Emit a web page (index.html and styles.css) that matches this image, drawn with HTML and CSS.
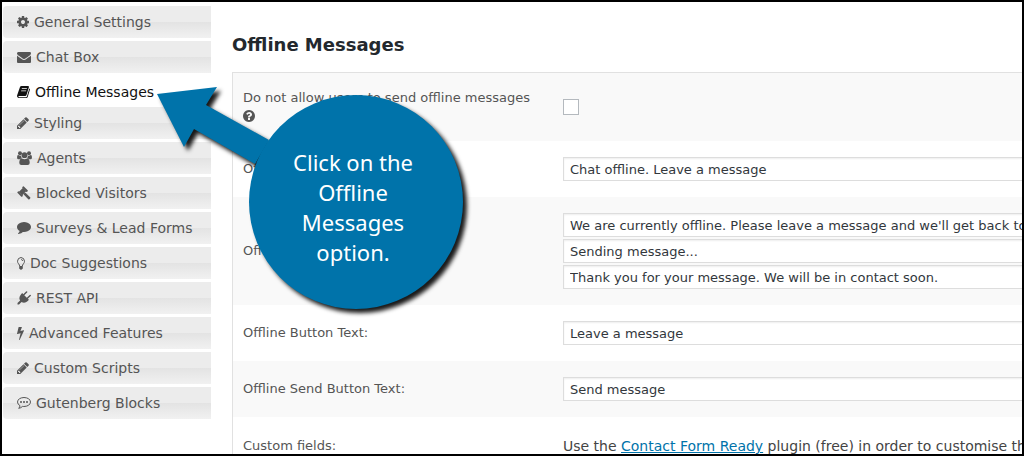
FILE: index.html
```
<!DOCTYPE html>
<html lang="en">

<head>
    <meta charset="UTF-8">
    <meta name="viewport" content="width=device-width, initial-scale=1.0">
    <title>Offline Messages</title>
    <link rel="stylesheet" href="styles.css">
</head>

<body>
    <div class="frame">
        <nav class="tabs">
            <a href="#general" class="tab">
                <svg class="icon w12" viewBox="128 128 1536 1536"><path d="M1152 896q0-106-75-181t-181-75-181 75-75 181 75 181 181 75 181-75 75-181zm512-109v222q0 12-8 23t-20 13l-185 28q-19 54-39 91 35 50 107 138 10 12 10 25t-9 23q-27 37-99 108t-94 71q-12 0-26-9l-138-108q-44 23-91 38-16 136-29 186-7 28-36 28h-222q-14 0-24.500-8.500t-11.500-21.500l-28-184q-49-16-90-37l-141 107q-10 9-25 9-14 0-25-11-126-114-165-168-7-10-7-23 0-12 8-23 15-21 51-66.500t54-70.500q-27-50-41-99l-183-27q-13-2-21-12.500t-8-23.500v-222q0-12 8-23t19-13l186-28q14-46 39-92-40-57-107-138-10-12-10-24 0-10 9-23 26-36 98.500-107.500t94.500-71.500q13 0 26 10l138 107q44-23 91-38 16-136 29-186 7-28 36-28h222q14 0 24.500 8.500t11.500 21.500l28 184q49 16 90 37l142-107q9-9 24-9 13 0 25 10 129 119 165 170 7 8 7 22 0 12-8 23-15 21-51 66.500t-54 70.500q26 50 41 98l183 28q13 2 21 12.500t8 23.500z"/></svg>
                General Settings
            </a>
            <a href="#chatbox" class="tab">
                <svg class="icon w14" viewBox="0 128 1792 1536"><path d="M1792 710v794q0 66-47 113t-113 47h-1472q-66 0-113-47t-47-113v-794q44 49 101 87 362 246 497 345 57 42 92.500 65.500t94.500 48 110 24.500h2q51 0 110-24.500t94.500-48 92.500-65.500q170-123 498-345 57-39 100-87zm0-294q0 79-49 151t-122 123q-376 261-468 325-10 7-42.500 30.500t-54 38-52 32.500-57.500 27-50 9h-2q-23 0-50-9t-57.500-27-52-32.500-54-38-42.500-30.500q-91-64-262-182.500t-205-142.500q-62-42-117-115.500t-55-136.500q0-78 41.500-130t118.500-52h1472q65 0 112.500 47t47.500 113z"/></svg>
                Chat Box
            </a>
            <a href="#offline" class="tab active">
                <svg class="icon w13" viewBox="0 0 13 12"><path fill-rule="evenodd" d="M4.500 0H11q1.200 0 .9 1.200L9.500 9q-.3 1-1.300 1H2q-.9 0-.7.600t1 .6h6.700q.7 0 .9-.7L12.300 2.500q.9.400.6 1.300L10.700 11q-.3 1-1.400 1H1.800Q.4 12 .1 10.600q-.2-1 .3-2L2.900 1.200Q3.300 0 4.500 0zM5 2.300l-.3.8h5l.3-.8zM4.300 4.500l-.3.8h5l.3-.8z"/></svg>
                Offline Messages
            </a>
            <a href="#styling" class="tab">
                <svg class="icon w12" viewBox="128 128 1536 1536"><path d="M491 1536l91-91-235-235-91 91v107h128v128h107zm523-928q0-22-22-22-10 0-17 7l-542 542q-7 7-7 17 0 22 22 22 10 0 17-7l542-542q7-7 7-17zm-54-192l416 416-832 832h-416v-416zm683 96q0 53-37 90l-166 166-416-416 166-165q36-38 90-38 53 0 91 38l235 234q37 39 37 91z"/></svg>
                Styling
            </a>
            <a href="#agents" class="tab">
                <svg class="icon w15" viewBox="0 0 15 14"><circle cx="3" cy="2.200" r="2"/><circle cx="12" cy="2.200" r="2"/><circle cx="7.500" cy="4.200" r="2.900"/><path d="M.2 7.500Q-.3 3.800 1.300 4q1.700 1 2.800.4Q4 6 4.900 7.200 3.600 7.300 3 8.200H1.300Q.4 8.200.2 7.500zM14.800 7.500Q15.300 3.800 13.700 4q-1.700 1-2.800.4.100 1.600-.8 2.800 1.300.1 1.900 1h1.700q.9 0 1.100-.7zM4.800 7.400q2.700 1.600 5.400 0 2.600.2 2.500 4.600-.1 2-2 2H4.300q-1.900 0-2-2-.1-4.400 2.500-4.600z"/></svg>
                Agents
            </a>
            <a href="#blocked" class="tab">
                <svg class="icon w14" viewBox="0 0 14 14"><g transform="rotate(-45 5.500 5.500)"><rect x="2.800" y="3.200" width="5.400" height="4.800"/><rect x="1" y="2.300" width="2" height="6.600" rx=".6"/><rect x="8" y="2.300" width="2" height="6.600" rx=".6"/><rect x="4.200" y="8" width="2.600" height="7.800" rx=".8"/></g></svg>
                Blocked Visitors
            </a>
            <a href="#surveys" class="tab">
                <svg class="icon w14" viewBox="0 128 1792 1792"><path d="M1792 896q0 174-120 321.500t-326 233-450 85.500q-70 0-145-8-198 175-460 242-49 14-114 22-17 2-30.500-9t-17.500-29v-1q-3-4-.5-12t2-10 4.500-9.500l6-9 7-8.500 8-9q7-8 31-34.500t34.500-38 31-39.500 32.500-51 27-59 26-76q-157-89-247.500-220t-90.500-281q0-130 71-248.500t191-204.500 286-136.500 348-50.500q244 0 450 85.500t326 233 120 321.500z"/></svg>
                Surveys &amp; Lead Forms
            </a>
            <a href="#docs" class="tab">
                <svg class="icon w8" viewBox="0 0 8 13"><path class="line" d="M2.700 9.500Q2.700 8 1.500 6.700.5 5.600.5 4.200.7.800 4 .5q3.300.3 3.500 3.700 0 1.400-1 2.500Q5.300 8 5.300 9.500zM4.200 2.500q1.300.1 1.400 1.400"/><path d="M2.200 9.500h3.600v2q-.5.700-1 .8-.8 1.200-1.600 0-.7-.2-1-.8z"/></svg>
                Doc Suggestions
            </a>
            <a href="#rest" class="tab">
                <svg class="icon w14" viewBox="0 0 14 14"><path d="M13.700 3.900q.5.500 0 1L10.800 7.700l1.100 1.100-1.100 1.100q-3.100 2.900-6.300 1L2 13.500H.5V12l2.600-2.500q-1.900-3.200 1-6.300l1.100-1.100 1.100 1.100L9.100.4q.5-.5 1 0t0 1L7.300 4.200l2.500 2.500 2.900-2.800q.5-.5 1 0z"/></svg>
                REST API
            </a>
            <a href="#advanced" class="tab">
                <svg class="icon w7" viewBox="448 0 896 1792"><path d="M1333 566q18 20 7 44l-540 1157q-13 25-42 25-4 0-14-2-17-5-25.500-19t-4.500-30l197-808-406 101q-4 1-12 1-18 0-31-11-18-15-13-39l201-825q4-14 16-23t28-9h328q19 0 32 12.500t13 29.500q0 8-5 18l-171 463 396-98q8-2 12-2 19 0 34 15z"/></svg>
                Advanced Features
            </a>
            <a href="#scripts" class="tab">
                <svg class="icon w12" viewBox="128 128 1536 1536"><path d="M491 1536l91-91-235-235-91 91v107h128v128h107zm523-928q0-22-22-22-10 0-17 7l-542 542q-7 7-7 17 0 22 22 22 10 0 17-7l542-542q7-7 7-17zm-54-192l416 416-832 832h-416v-416zm683 96q0 53-37 90l-166 166-416-416 166-165q36-38 90-38 53 0 91 38l235 234q37 39 37 91z"/></svg>
                Custom Scripts
            </a>
            <a href="#gutenberg" class="tab">
                <svg class="icon w14" viewBox="0 0 14 12"><path class="line" d="M7 .5q6 .3 6.500 4.500Q13 9.200 7 9.500q-.8 0-1.500-.1Q4 11 1.700 11.300 3 10 3 8.700.6 7.400.5 5 1 .8 7 .5z"/><circle cx="4" cy="5" r="1"/><circle cx="7" cy="5" r="1"/><circle cx="10" cy="5" r="1"/></svg>
                Gutenberg Blocks
            </a>
        </nav>

        <main class="content">
            <h3>Offline Messages</h3>
            <table class="settings">
                <tr>
                    <td class="name">
                        <label for="disable">Do not allow users to send offline messages</label>
                        <svg class="help" viewBox="128 128 1536 1536"><path d="M1024 1376v-192q0-14-9-23t-23-9h-192q-14 0-23 9t-9 23v192q0 14 9 23t23 9h192q14 0 23-9t9-23zm256-672q0-88-55.500-163t-138.500-116-170-41q-243 0-371 213-15 24 8 42l132 100q7 6 19 6 16 0 25-12 53-68 86-92 34-24 86-24 48 0 85.500 26t37.500 59q0 38-20 61t-68 45q-63 28-115.500 86.500t-52.500 125.500v36q0 14 9 23t23 9h192q14 0 23-9t9-23q0-19 21.500-49.500t54.500-49.500q32-18 49-28.500t46-35 44.500-48 28-60.500 12.500-81zm384 192q0 209-103 385.500t-279.500 279.500-385.500 103-385.500-103-279.500-279.500-103-385.500 103-385.500 279.500-279.500 385.500-103 385.500 103 279.500 279.500 103 385.500z"/></svg>
                    </td>
                    <td><input type="checkbox" id="disable"></td>
                </tr>
                <tr>
                    <td class="name"><label for="title">Offline Chat Box Title:</label></td>
                    <td><input type="text" id="title" value="Chat offline. Leave a message"></td>
                </tr>
                <tr>
                    <td class="name"><label for="msg1">Offline Text Fields:</label></td>
                    <td>
                        <div class="stack">
                            <input type="text" id="msg1" value="We are currently offline. Please leave a message and we'll get back to you shortly.">
                            <input type="text" aria-label="Sending text" value="Sending message...">
                            <input type="text" aria-label="Sent text" value="Thank you for your message. We will be in contact soon.">
                        </div>
                    </td>
                </tr>
                <tr>
                    <td class="name"><label for="button">Offline Button Text:</label></td>
                    <td><input type="text" id="button" value="Leave a message"></td>
                </tr>
                <tr>
                    <td class="name"><label for="send">Offline Send Button Text:</label></td>
                    <td><input type="text" id="send" value="Send message"></td>
                </tr>
                <tr>
                    <td class="name">Custom fields:</td>
                    <td class="note">Use the <a href="#ready">Contact Form Ready</a> plugin (free) in order to customise the fields</td>
                </tr>
            </table>
        </main>

        <div class="callout">
            <svg viewBox="0 0 320 230">
                <path d="M2 12L62 5 51 23 114 58 100 82 39 47 29 65z"/>
                <circle cx="201" cy="120" r="107"/>
            </svg>
            <p>Click on the<br>Offline<br>Messages<br>option.</p>
        </div>
    </div>
</body>

</html>
```
FILE: styles.css
```
* {
    box-sizing: border-box;
}

body {
    margin: 0;
    background: #fff;
    color: #444;
    font-family: "DejaVu Sans", Verdana, sans-serif;
    font-size: 13px;
}

.frame {
    position: relative;
    display: flex;
    height: 100vh;
    border: 2px solid #000;
    overflow: hidden;
}

.tabs {
    display: flex;
    flex-direction: column;
    gap: 3px;
    flex: 0 0 209px;
    padding: 4px 0 0 1px;
}

.tab {
    display: flex;
    align-items: center;
    gap: 5px;
    flex: 0 0 32px;
    padding-left: 14px;
    border-radius: 4px 0 0 4px;
    background: linear-gradient(#ececec 50%, #e3e3e3 50%, #f1f1f1);
    color: #555;
    font-size: 14px;
    text-decoration: none;
    white-space: nowrap;
}

/* the open tab touches the one below it */
.tab.active {
    margin-bottom: -4px;
    background: #fff;
    color: #111;
}

.icon {
    fill: currentColor;
    max-height: 14px;
}

.icon .line {
    fill: none;
    stroke: currentColor;
}

.w7 { width: 7px; }
.w8 { width: 8px; }
.w12 { width: 12px; }
.w13 { width: 13px; }
.w14 { width: 14px; }
.w15 { width: 15px; }

.content {
    flex: 1;
    min-width: 0;
    margin: 0 -24px 0 21px;
}

h3 {
    margin: 31px 0 15px;
    color: #23282d;
    font-size: 18px;
    line-height: 24px;
}

.settings {
    width: 100%;
    border: 1px solid #e1e1e1;
    border-spacing: 0;
    table-layout: fixed;
}

.settings tr:nth-child(odd) {
    background: #f9f9f9;
}

.settings td {
    padding: 16px 10px;
    line-height: 18px;
}

.settings .name {
    width: 320px;
    color: #555;
}

.help {
    display: block;
    width: 12px;
    height: 18px;
    fill: #555;
}

input[type="text"] {
    display: block;
    width: 100%;
    height: 24px;
    margin: 0;
    padding: 0 6px;
    border: 1px solid #ddd;
    background: #fff;
    box-shadow: inset 0 1px 2px rgba(0, 0, 0, 0.07);
    color: #32373c;
    font: inherit;
}

input[type="checkbox"] {
    display: block;
    appearance: none;
    width: 16px;
    height: 16px;
    margin: 0;
    border: 1px solid #b4b9be;
    background: #fff;
}

.stack {
    display: grid;
    gap: 2px;
}

.settings .note {
    font-size: 14px;
    line-height: 26px;
    white-space: nowrap;
}

.note a {
    color: #0073aa;
}

/* round hint with an arrow, floats over the page */
.callout {
    position: absolute;
    top: 80px;
    left: 153px;
    width: 320px;
}

.callout svg {
    display: block;
    overflow: visible;
    fill: #0073aa;
    filter: drop-shadow(4px 4px 2px rgba(0, 0, 0, 0.9));
}

.callout p {
    position: absolute;
    top: 65px;
    left: 91px;
    width: 214px;
    margin: 0;
    color: #fff;
    font-family: "Noto Sans", sans-serif;
    font-size: 22px;
    line-height: 30px;
    text-align: center;
}
```
